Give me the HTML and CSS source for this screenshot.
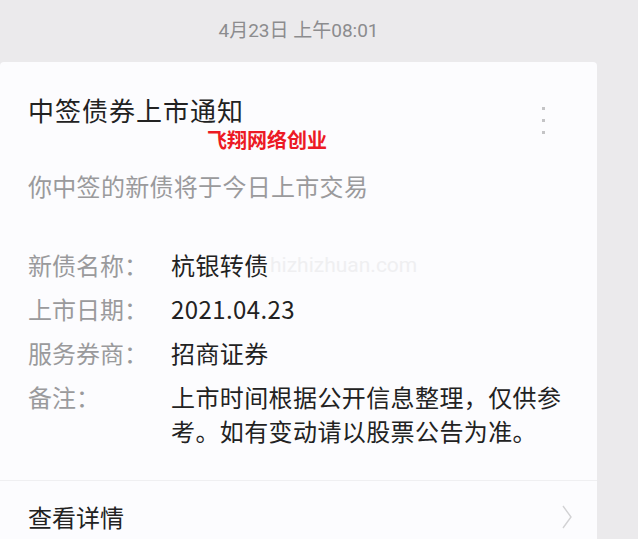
FILE: index.html
```html
<!DOCTYPE html>
<html lang="zh-CN">
<head>
<meta charset="UTF-8" />
<meta name="viewport" content="width=device-width, initial-scale=1" />
<title>中签债券上市通知</title>
<link rel="stylesheet" href="styles.css">
</head>
<body>

<div class="data">4月23日 上午08:01</div>

<section class="cartao">
  <div class="topo">
    <h1 class="titulo">中签债券上市通知</h1>
    <span class="pontos"><i></i><i></i><i></i></span>
  </div>
  <div class="marca">飞翔网络创业</div>
  <p class="resumo">你中签的新债将于今日上市交易</p>

  <div class="linhas">
    <span class="marca-dagua">hizhizhuan.com</span>
    <div class="linha">
      <span class="rotulo">新债名称：</span>
      <span class="valor">杭银转债</span>
    </div>
    <div class="linha">
      <span class="rotulo">上市日期：</span>
      <span class="valor">2021.04.23</span>
    </div>
    <div class="linha">
      <span class="rotulo">服务券商：</span>
      <span class="valor">招商证券</span>
    </div>
    <div class="linha">
      <span class="rotulo">备注：</span>
      <span class="valor">上市时间根据公开信息整理，仅供参考。如有变动请以股票公告为准。</span>
    </div>
  </div>

  <div class="detalhes">
    <span>查看详情</span>
    <svg width="12" height="26" viewBox="0 0 12 26">
      <path d="M2 2 L10 13 L2 24" fill="none" stroke="#d2d2d4" stroke-width="1.4" />
    </svg>
  </div>
</section>

</body>
</html>
```

FILE: styles.css
```css
body {
  margin: 0;
  background: #ebeaec;
  font-family: "Noto Sans CJK SC", "Noto Sans", sans-serif;
  color: #222;
  overflow: hidden;
}
.data {
  width: 597px;
  height: 62px;
  line-height: 62px;
  text-align: center;
  font-family: Roboto, "Noto Sans CJK SC", sans-serif;
  font-size: 19px;
  color: #8c8c8e;
}

/* cartao da notificacao */
.cartao {
  width: 597px;
  background: #fcfcfe;
  border-radius: 4px 4px 0 0;
  padding-top: 30px;
}
.topo {
  display: flex;
  justify-content: space-between;
  align-items: flex-start;
  height: 36px;
  padding: 0 52px 0 28px;
}
.titulo {
  margin: 0;
  font-size: 26px;
  font-weight: normal;
  line-height: 36px;
  letter-spacing: 1px;
}
.pontos {
  display: flex;
  flex-direction: column;
  gap: 9px;
  margin-top: 15px;
}
.pontos i {
  width: 3px;
  height: 3px;
  background: #c4c4c6;
}
.marca {
  margin-left: 207px;
  font-size: 20px;
  line-height: 24px;
  font-weight: bold;
  color: #ec1a24;
}
.resumo {
  margin: 17px 0 0 28px;
  font-size: 24px;
  line-height: 34px;
  color: #9a9a9c;
  letter-spacing: 0.3px;
}
.linhas {
  position: relative;
  padding: 45px 26px 32px 28px;
  border-bottom: 1px solid #efeff1;
}
.marca-dagua {
  position: absolute;
  left: 270px;
  top: 50px;
  font-family: Roboto, sans-serif;
  font-size: 21px;
  color: #efeff1;
}
.linha {
  position: relative;
  display: flex;
  margin-bottom: 10px;
  font-size: 24px;
  line-height: 34px;
}
.linha:last-child {
  margin-bottom: 0;
}
.rotulo {
  width: 143px;
  flex-shrink: 0;
  color: #9a9a9c;
}
.valor {
  flex: 1;
  color: #222;
  letter-spacing: 0.4px;
}
.detalhes {
  display: flex;
  justify-content: space-between;
  align-items: center;
  padding: 18px 24px 30px 28px;
  font-size: 24px;
  line-height: 36px;
}
```
